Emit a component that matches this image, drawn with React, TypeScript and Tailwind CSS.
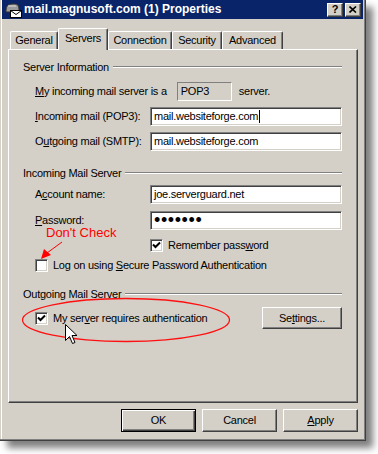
import React from 'react';

const sunken =
  'border border-t-[#808080] border-l-[#808080] border-b-white border-r-white shadow-[inset_1px_1px_#404040,inset_-1px_-1px_#d4d0c8]';
const raised =
  'border border-t-white border-l-white border-r-[#404040] border-b-[#404040] shadow-[inset_-1px_-1px_#808080]';

function Group({ label }: { label: string }) {
  return (
    <div className="flex items-center h-[14px] pl-[14px] pr-[15px]">
      <span>{label}</span>
      <div className="flex-1 ml-[4px] h-[2px] border-t border-t-[#808080] border-b border-b-white" />
    </div>
  );
}

function Check({ checked }: { checked?: boolean }) {
  return (
    <div className={`w-[13px] h-[13px] bg-white shrink-0 flex items-center justify-center ${sunken}`}>
      {checked && (
        <svg width="9" height="9" viewBox="0 0 9 9">
          <path d="M1 3.5 L3.5 6 L8 1.5" stroke="#000" strokeWidth="2" fill="none" />
        </svg>
      )}
    </div>
  );
}

function Field({ children }: { children: React.ReactNode }) {
  return (
    <div className={`flex-1 h-[19px] bg-white flex items-center pl-[3px] ${sunken}`}>{children}</div>
  );
}

function Tab({ label, w, active }: { label: string; w: string; active?: boolean }) {
  return (
    <div
      className={`${w} flex items-center justify-center rounded-t-[2px] border-t border-l border-t-white border-l-white border-r border-r-[#404040] shadow-[inset_-1px_0_#808080] bg-[#d4d0c8] ${
        active ? 'h-[22px] -mb-[1px] z-10 pb-[3px]' : 'h-[18px]'
      }`}
    >
      {label}
    </div>
  );
}

export default function App() {
  return (
    <div className="relative w-[378px] h-[454px] bg-white overflow-hidden font-['Liberation_Sans',Arial,sans-serif] text-[11px] leading-[13px] tracking-[-0.25px] text-black">
      <div className="w-[366px] h-[441px] bg-[#d4d0c8] flex flex-col pl-[2px] pr-[3px] pb-[3px] shadow-[inset_-1px_-1px_#404040,inset_-2px_-2px_#808080,inset_1px_0_#d4d0c8,inset_2px_0_#fff,7px_7px_7px_rgba(0,0,0,0.5)]">
        {/* title bar */}
        <div className="h-[19px] bg-[#0a246a] flex items-center pl-[2px] pr-[2px]">
          <svg width="18" height="16" viewBox="0 0 18 16" className="shrink-0">
            <path d="M2 8 Q2 2 8 2 L11 2 Q15 2 15 7 L15 10 L2 10 Z" fill="#9a9a9a" stroke="#303030" strokeWidth="1" />
            <path d="M4 4 L12 4" stroke="#dcdcdc" strokeWidth="1" />
            <rect x="6.5" y="8.5" width="11" height="7" fill="#fff" stroke="#000" strokeWidth="1" />
            <path d="M6.5 8.5 L12 12.5 L17.5 8.5" stroke="#000" strokeWidth="1" fill="none" />
          </svg>
          <span className="ml-[2px] text-white font-bold text-[12px] tracking-normal">
            mail.magnusoft.com (1) Properties
          </span>
          <div className="flex-1" />
          <div className={`w-[16px] h-[14px] bg-[#d4d0c8] flex items-center justify-center font-bold text-[11px] ${raised}`}>?</div>
          <div className={`ml-[2px] w-[16px] h-[14px] bg-[#d4d0c8] flex items-center justify-center ${raised}`}>
            <svg width="8" height="7" viewBox="0 0 8 7">
              <path d="M0.5 0.5 L7 6.5 M7 0.5 L0.5 6.5" stroke="#000" strokeWidth="1.6" />
            </svg>
          </div>
        </div>

        {/* tabs */}
        <div className="mt-[9px] h-[21px] flex items-end pl-[8px]">
          <Tab label="General" w="w-[48px]" />
          <Tab label="Servers" w="w-[50px]" active />
          <Tab label="Connection" w="w-[64px]" />
          <Tab label="Security" w="w-[50px]" />
          <Tab label="Advanced" w="w-[61px]" />
        </div>

        {/* panel */}
        <div className="ml-[6px] mr-[5px] h-[354px] border border-t-white border-l-white border-r-[#404040] border-b-[#404040] shadow-[inset_-1px_-1px_#808080] flex flex-col">
          <div className="mt-[10px]">
            <Group label="Server Information" />
          </div>
          <div className="mt-[8px] h-[19px] flex items-center pl-[26px]">
            <span><u>M</u>y incoming mail server is a</span>
            <div className="ml-[10px] w-[55px] h-[19px] flex items-center pl-[3px] border border-t-[#808080] border-l-[#808080] border-b-white border-r-white">
              POP3
            </div>
            <span className="ml-[7px]">server.</span>
          </div>
          <div className="mt-[6px] h-[19px] flex items-center pl-[26px] pr-[15px]">
            <span className="w-[115px]"><u>I</u>ncoming mail (POP3):</span>
            <Field>
              mail.websiteforge.com<span className="ml-[1px] w-[1px] h-[13px] bg-black" />
            </Field>
          </div>
          <div className="mt-[6px] h-[19px] flex items-center pl-[26px] pr-[15px]">
            <span className="w-[115px]">O<u>u</u>tgoing mail (SMTP):</span>
            <Field>mail.websiteforge.com</Field>
          </div>

          <div className="mt-[15px]">
            <Group label="Incoming Mail Server" />
          </div>
          <div className="mt-[5px] h-[19px] flex items-center pl-[26px] pr-[15px]">
            <span className="w-[115px]">A<u>c</u>count name:</span>
            <Field>joe.serverguard.net</Field>
          </div>
          <div className="mt-[7px] h-[19px] flex items-center pl-[26px] pr-[15px]">
            <span className="w-[115px]"><u>P</u>assword:</span>
            <Field>
              <span className="text-[18px] leading-none tracking-[0.6px] -mt-[2px]">•••••••</span>
            </Field>
          </div>
          <div className="mt-[9px] h-[13px] flex items-center pl-[141px] gap-[5px]">
            <Check checked />
            <span>Remember pass<u>w</u>ord</span>
          </div>
          <div className="mt-[7px] h-[13px] flex items-center pl-[26px] gap-[5px]">
            <Check />
            <span>Log on using <u>S</u>ecure Password Authentication</span>
          </div>

          <div className="mt-[15px]">
            <Group label="Outgoing Mail Server" />
          </div>
          <div className="mt-[6px] h-[22px] flex items-center pl-[26px] pr-[15px]">
            <Check checked />
            <span className="ml-[5px]">My ser<u>v</u>er requires authentication</span>
            <div className="flex-1" />
            <div className={`w-[80px] h-[22px] flex items-center justify-center ${raised}`}>
              Se<u>t</u>tings...
            </div>
          </div>
        </div>

        {/* buttons */}
        <div className="mt-[6px] mr-[5px] flex justify-end gap-[6px]">
          <div className="w-[75px] h-[23px] flex items-center justify-center border border-black shadow-[inset_1px_1px_#fff,inset_-1px_-1px_#404040,inset_-2px_-2px_#808080]">
            OK
          </div>
          <div className={`w-[75px] h-[23px] flex items-center justify-center ${raised}`}>Cancel</div>
          <div className={`w-[75px] h-[23px] flex items-center justify-center ${raised}`}>
            <u>A</u>pply
          </div>
        </div>
      </div>

      {/* annotations */}
      <span className="absolute left-[46px] top-[227px] text-[13px] leading-[11px] tracking-normal text-[#ff0000]">
        Don't Check
      </span>
      <svg className="absolute left-0 top-0 pointer-events-none" width="378" height="454">
        <line x1="62" y1="242" x2="47" y2="253" stroke="#ff0000" strokeWidth="1" />
        <polygon points="41,259 44,249 51,255" fill="#ff0000" />
        <ellipse cx="126" cy="320" rx="103.5" ry="21.5" fill="none" stroke="#ff1010" strokeWidth="1.3" />
        <path
          d="M65.5 324.5 L65.5 340.5 L69.5 336.5 L72.5 343.5 L75 342.5 L72 335.5 L77 335.5 Z"
          fill="#fff"
          stroke="#000"
          strokeWidth="1"
        />
      </svg>
    </div>
  );
}
